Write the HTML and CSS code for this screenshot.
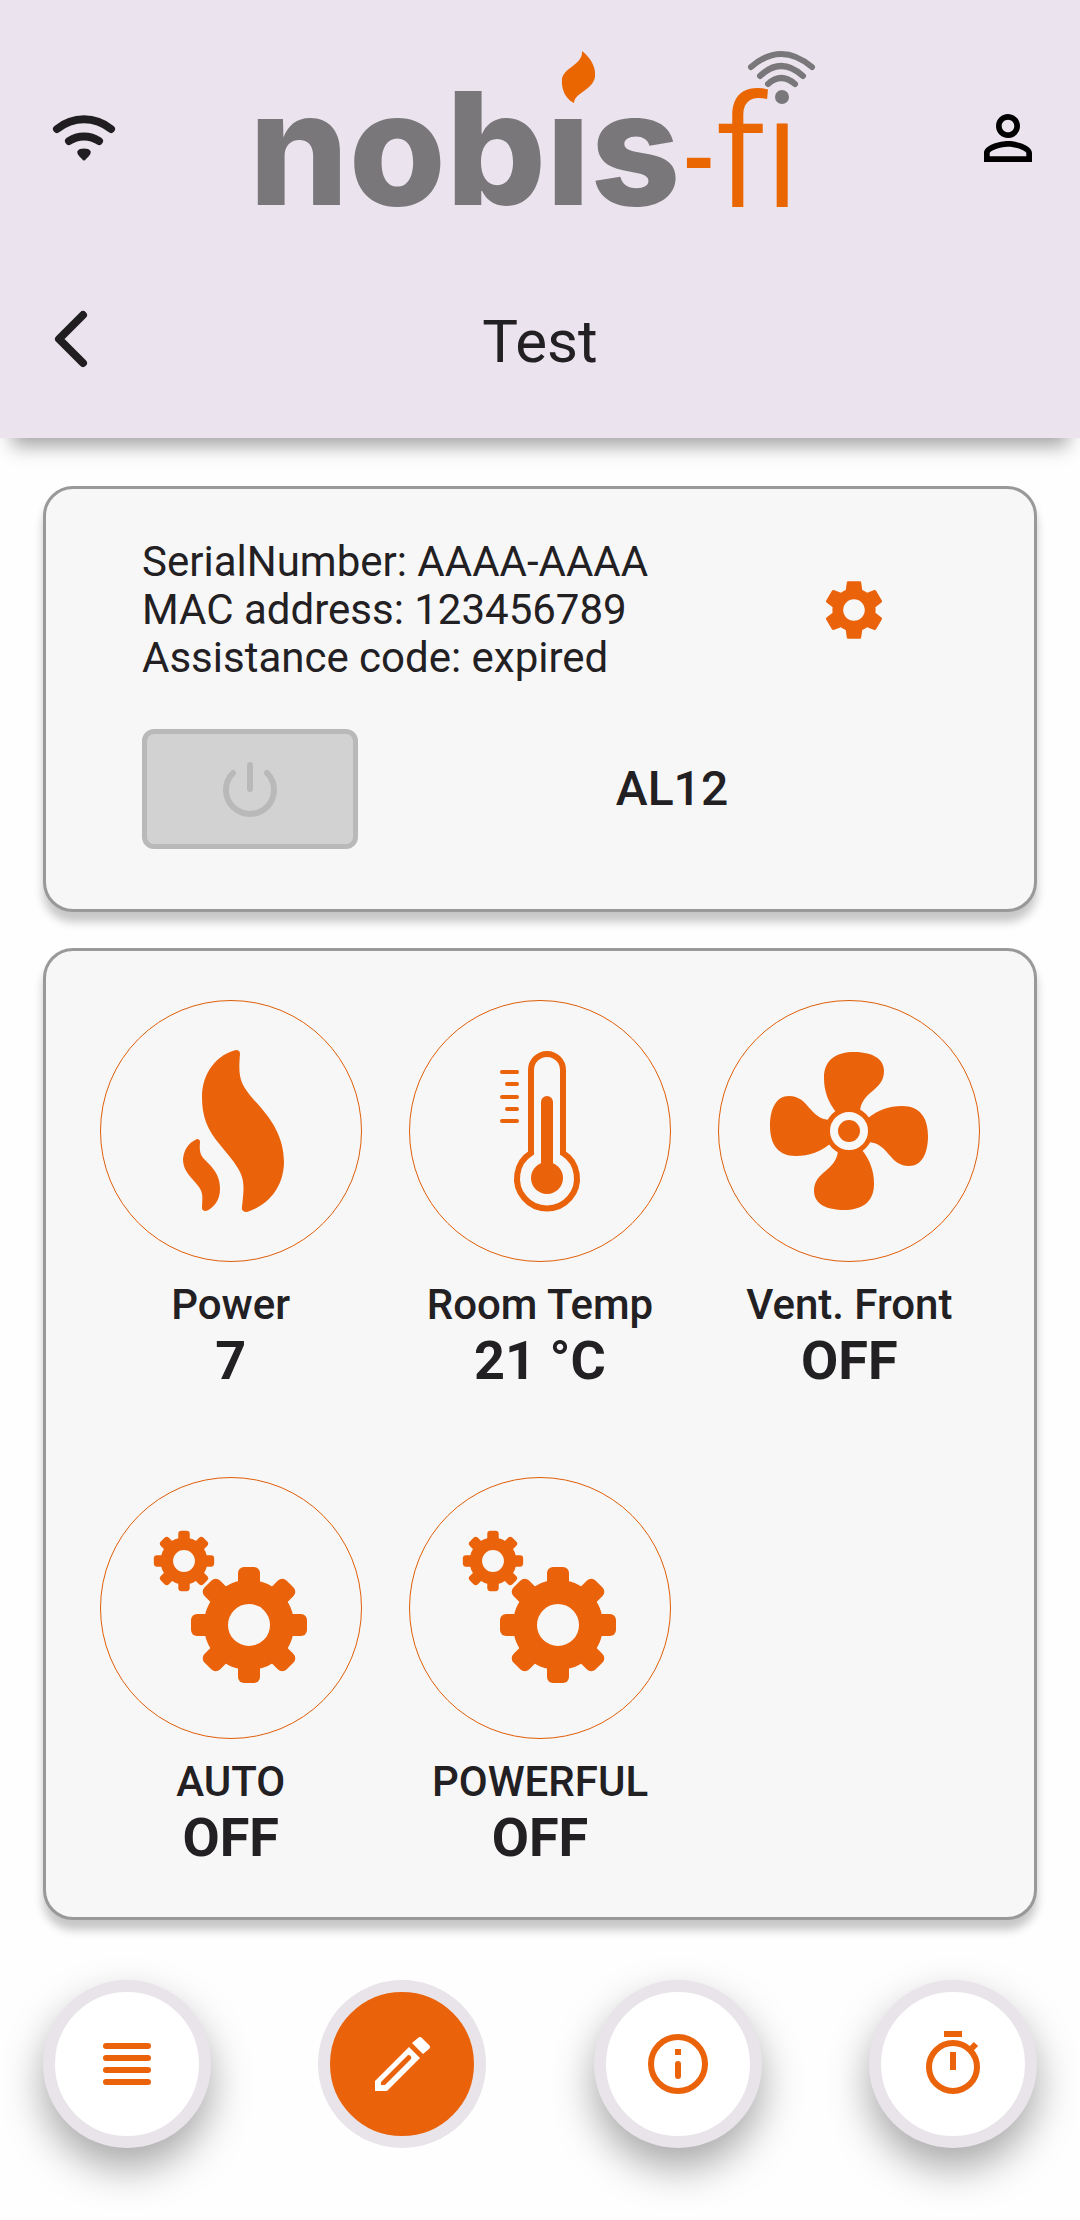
FILE: index.html
```html
<!DOCTYPE html>
<html lang="en">
<head>
<meta charset="utf-8">
<meta name="viewport" content="width=device-width">
<title>Test - nobis-fi</title>
<link rel="stylesheet" href="styles.css">
</head>
<body>
<svg class="defs" aria-hidden="true">
  <defs>
    <g id="cog">
      <circle r="33" fill="none" stroke="currentColor" stroke-width="24"/>
      <g id="teeth">
        <rect x="-11" y="-58" width="22" height="24" rx="6"/>
        <rect x="-11" y="34" width="22" height="24" rx="6"/>
        <rect x="-58" y="-11" width="24" height="22" rx="6"/>
        <rect x="34" y="-11" width="24" height="22" rx="6"/>
      </g>
      <use href="#teeth" transform="rotate(45)"/>
    </g>
    <path id="blade" d="M-13 -19C-21 -29 -25 -40 -25 -53C-25 -72 -12 -79 5 -79C22 -79 35 -73 35 -60C35 -40 12 -40 11 -19Z"/>
    <symbol id="cogs" viewBox="0 0 262 262">
      <use href="#cog" transform="translate(149 148)"/>
      <use href="#cog" transform="translate(84 84) scale(.52)"/>
    </symbol>
  </defs>
</svg>

<header class="header">
  <div class="brand">
    <button class="icon-button" type="button" aria-label="Connection">
      <svg class="icon" viewBox="0 0 72 72" fill="none" stroke="currentColor" stroke-width="8" stroke-linecap="round">
        <path d="M9 27C25 14 47 14 63 27M21 39C30 33 42 33 51 39"/>
        <path d="M32 47Q36 46 40 47Q45 49 41 54L38 57Q36 60 34 57L31 54Q27 49 32 47Z" fill="currentColor" stroke="none"/>
      </svg>
    </button>
    <svg class="logo" viewBox="246 30 600 216" role="img" aria-label="nobis-fi">
      <text class="logo-main" x="249" y="205">nobıs</text>
      <text class="logo-dash" x="681" y="187">-</text>
      <text class="logo-suffix" x="715" y="206">f</text>
      <text class="logo-suffix" x="765" y="206">ı</text>
      <path class="logo-flame" d="M582 51C592 59 596 68 595 77C592 91 575 92 574 103C565 99 561 88 562 79C564 67 583 65 582 51Z"/>
      <circle cx="782" cy="97" r="7" fill="#797779"/>
      <path class="logo-waves" d="M768 84Q781 72 795 84M760 76Q781 56 803 76M751 67Q781 41 812 67"/>
    </svg>
    <button class="icon-button icon-button-dark" type="button" aria-label="Account">
      <svg class="icon" viewBox="0 0 24 24" fill="currentColor"><path d="M12 5.900c1.160 0 2.100.94 2.100 2.100s-.94 2.100-2.100 2.100S9.900 9.160 9.900 8s.94-2.100 2.100-2.100m0 9c2.970 0 6.100 1.460 6.100 2.100v1.100H5.900V17c0-.64 3.130-2.100 6.100-2.100M12 4C9.790 4 8 5.790 8 8s1.790 4 4 4 4-1.790 4-4-1.790-4-4-4zm0 9c-2.670 0-8 1.340-8 4v3h16v-3c0-2.660-5.330-4-8-4z"/></svg>
    </button>
  </div>
  <div class="title-bar">
    <button class="icon-button" type="button" aria-label="Back">
      <svg class="icon" viewBox="0 0 72 72" fill="none" stroke="currentColor" stroke-width="8" stroke-linecap="round" stroke-linejoin="round"><path d="M35 12L11 36L35 60"/></svg>
    </button>
    <h1 class="title">Test</h1>
  </div>
</header>

<main class="content">
  <section class="card device">
    <div class="device-info">
      <div class="device-lines">
        <p>SerialNumber: AAAA-AAAA</p>
        <p>MAC address: 123456789</p>
        <p>Assistance code: expired</p>
      </div>
      <div class="settings">
        <button class="icon-button icon-button-accent" type="button" aria-label="Settings">
          <svg class="icon" viewBox="0 0 24 24" fill="currentColor"><path d="M19.140 12.940c0.040-0.300,0.060-0.610,0.060-0.940c0-0.320-0.020-0.640-0.070-0.940l2.030-1.580c0.180-0.140,0.230-0.410,0.120-0.610l-1.920-3.320c-0.120-0.220-0.370-0.290-0.590-0.220l-2.390,0.960c-0.500-0.380-1.030-0.700-1.620-0.940L14.400,2.810c-0.040-0.240-0.240-0.410-0.480-0.410h-3.840c-0.240,0-0.430,0.170-0.470,0.410L9.250,5.350C8.660,5.590,8.120,5.920,7.630,6.290L5.240,5.330c-0.220-0.080-0.470,0-0.590,0.220L2.740,8.870C2.620,9.080,2.660,9.340,2.860,9.480l2.030,1.580C4.840,11.360,4.800,11.690,4.800,12s0.020,0.640,0.070,0.940l-2.030,1.580c-0.180,0.140-0.230,0.410-0.120,0.610l1.920,3.320c0.120,0.220,0.370,0.290,0.590,0.220l2.390-0.960c0.500,0.380,1.030,0.700,1.620,0.940l0.360,2.540c0.050,0.240,0.240,0.410,0.480,0.410h3.840c0.240,0,0.440-0.170,0.470-0.410l0.360-2.540c0.590-0.240,1.130-0.560,1.620-0.940l2.390,0.960c0.220,0.080,0.470,0,0.590-0.220l1.920-3.320c0.120-0.220,0.070-0.470-0.120-0.610L19.140,12.940z M12,15.600c-1.980,0-3.600-1.620-3.600-3.600s1.620-3.600,3.600-3.600s3.600,1.620,3.600,3.600S13.980,15.600,12,15.600z"/></svg>
        </button>
      </div>
    </div>
    <div class="device-state">
      <button class="power" type="button" disabled aria-label="Power on or off">
        <svg class="icon" viewBox="0 0 72 72" fill="none" stroke="currentColor" stroke-width="6" stroke-linecap="round"><path d="M36 12V36M19 20A24 24 0 1 0 53 20"/></svg>
      </button>
      <p class="alarm">AL12</p>
    </div>
  </section>

  <section class="card functions">
    <button class="function" type="button">
      <svg class="dial" viewBox="0 0 262 262" fill="currentColor">
        <path d="M136 50Q140 50 140 54C138 78 140 84 154 100C172 119 184 137 184 163C183 190 166 206 147 212Q141 212 142 207C145 178 146 176 121 146C107 130 102 116 102 97C102 72 118 54 136 50Z"/>
        <path d="M97 139Q100 139 100 142C99 154 101 156 108 163C117 172 120 179 120 189C120 200 114 208 106 211Q102 211 102 208C103 193 103 191 94 181C86 172 83 167 83 159C84 150 88 143 97 139Z"/>
      </svg>
      <span class="label">Power</span>
      <span class="value">7</span>
    </button>
    <button class="function" type="button">
      <svg class="dial" viewBox="0 0 262 262" fill="currentColor">
        <path d="M122 153V70a16 16 0 0 1 32 0V153A30 30 0 1 1 122 153Z" fill="none" stroke="currentColor" stroke-width="6"/>
        <rect x="132" y="96" width="12" height="76" rx="6"/>
        <circle cx="138" cy="178" r="16"/>
        <path d="M93 72H108M98 84H108M93 97H108M98 109H108M93 121H108" fill="none" stroke="currentColor" stroke-width="4" stroke-linecap="round"/>
      </svg>
      <span class="label">Room Temp</span>
      <span class="value">21 °C</span>
    </button>
    <button class="function" type="button">
      <svg class="dial" viewBox="-131 -131 262 262" fill="currentColor">
        <use href="#blade"/>
        <use href="#blade" transform="rotate(90)"/>
        <use href="#blade" transform="rotate(180)"/>
        <use href="#blade" transform="rotate(270)"/>
        <circle r="24"/>
        <circle r="15" fill="none" stroke="#f8f8f8" stroke-width="8"/>
      </svg>
      <span class="label">Vent. Front</span>
      <span class="value">OFF</span>
    </button>
    <button class="function" type="button">
      <svg class="dial" viewBox="0 0 262 262" fill="currentColor"><use href="#cogs" width="262" height="262"/></svg>
      <span class="label">AUTO</span>
      <span class="value">OFF</span>
    </button>
    <button class="function" type="button">
      <svg class="dial" viewBox="0 0 262 262" fill="currentColor"><use href="#cogs" width="262" height="262"/></svg>
      <span class="label">POWERFUL</span>
      <span class="value">OFF</span>
    </button>
  </section>
</main>

<nav class="tabs">
  <button class="tab" type="button" aria-label="List">
    <svg class="icon" viewBox="0 0 72 72" fill="none" stroke="currentColor" stroke-width="6" stroke-linecap="round"><path d="M15 18H57M15 30H57M15 42H57M15 54H57"/></svg>
  </button>
  <button class="tab tab-active" type="button" aria-label="Edit" aria-current="page">
    <svg class="icon" viewBox="0 0 72 72" fill="currentColor">
      <path fill-rule="evenodd" d="M9 63V53L43 19L54 30L21 63ZM15 54V57H19L45 31Q46 27 42 27Z"/>
      <path d="M46 15L52 10Q54 8 56 10L63 17Q65 19 63 21L57 26Z"/>
    </svg>
  </button>
  <button class="tab" type="button" aria-label="Information">
    <svg class="icon" viewBox="0 0 72 72" fill="none" stroke="currentColor" stroke-width="6"><circle cx="36" cy="36" r="27"/><path d="M36 21V27"/><path d="M36 36V48" stroke-linecap="round"/></svg>
  </button>
  <button class="tab" type="button" aria-label="Timer">
    <svg class="icon" viewBox="0 0 72 72" fill="none" stroke="currentColor" stroke-width="6"><circle cx="36" cy="39" r="24"/><path d="M27 6H45M36 24V42M52 23L59 16"/></svg>
  </button>
</nav>
</body>
</html>
```
FILE: styles.css
```css
* {
  box-sizing: border-box;
}

body {
  margin: 0;
  background: #fefefe;
  color: #222022;
  font-family: Roboto, "Liberation Sans", sans-serif;
}

p,
h1 {
  margin: 0;
}

button {
  margin: 0;
  padding: 0;
  border: 0;
  background: none;
  color: inherit;
  font: inherit;
}

.defs {
  position: absolute;
  width: 0;
  height: 0;
}

.icon {
  display: block;
  width: 72px;
  height: 72px;
}

.icon-button {
  flex: none;
  color: #211e22;
}

.icon-button-dark {
  color: #000;
}

.icon-button-accent {
  color: #ea620a;
}

/* Header */
.header {
  display: flex;
  flex-direction: column;
  gap: 57px;
  padding: 30px 0 57px;
  background: #ebe3ee;
  box-shadow: 0 20px 18px -12px rgba(0, 0, 0, 0.36);
}

.brand {
  display: flex;
  align-items: center;
  justify-content: space-between;
  padding: 0 36px 0 48px;
}

.logo {
  width: 600px;
  height: 216px;
}

.logo-main {
  fill: #797779;
  font-family: Inter, sans-serif;
  font-size: 157px;
  font-weight: 800;
}

.logo-suffix {
  fill: #ea6600;
  stroke: #ea6600;
  stroke-width: 2;
  font-family: Roboto, sans-serif;
  font-size: 154px;
  font-weight: 300;
}

.logo-dash {
  fill: #ea6600;
  font-family: Roboto, sans-serif;
  font-size: 80px;
  font-weight: 900;
}

.logo-flame {
  fill: #ea6600;
}

.logo-waves {
  fill: none;
  stroke: #797779;
  stroke-width: 6;
  stroke-linecap: round;
}

.title-bar {
  display: grid;
  grid-template-columns: 72px 1fr 72px;
  align-items: start;
  padding: 0 48px;
}

.title {
  font-size: 60px;
  font-weight: 400;
  line-height: 78px;
  text-align: center;
}

/* Cards */
.content {
  display: flex;
  flex-direction: column;
  gap: 36px;
  padding: 48px 43px 60px;
}

.card {
  border: 3px solid #9a999a;
  border-radius: 30px;
  background: #f7f7f8;
  box-shadow: 0 10px 10px rgba(0, 0, 0, 0.22);
}

.device {
  display: flex;
  flex-direction: column;
  gap: 47px;
  padding: 49px 48px 60px 96px;
}

.device-info {
  display: flex;
  align-items: center;
}

.device-lines {
  flex: 1;
  font-size: 42px;
  line-height: 48px;
}

.settings {
  display: flex;
  flex: none;
  justify-content: center;
  width: 264px;
}

.device-state {
  display: flex;
  align-items: center;
}

.power {
  display: flex;
  flex: none;
  align-items: center;
  justify-content: center;
  width: 216px;
  height: 120px;
  border: 5px solid #b9b9b9;
  border-radius: 12px;
  background: #d2d2d2;
  color: #b9b9b9;
}

.alarm {
  flex: 1;
  font-size: 48px;
  font-weight: 500;
  line-height: 56px;
  text-align: center;
}

.functions {
  display: grid;
  grid-template-columns: repeat(3, 1fr);
  row-gap: 84px;
  padding: 49px 30px 47px;
}

.function {
  display: flex;
  flex-direction: column;
  align-items: center;
}

.dial {
  width: 262px;
  height: 262px;
  margin-bottom: 19px;
  border-radius: 50%;
  outline: 1px solid #e05e08;
  outline-offset: -1px;
  color: #ea620a;
}

.label {
  font-size: 42px;
  font-weight: 500;
  line-height: 48px;
}

.value {
  font-size: 54px;
  font-weight: 700;
  line-height: 64px;
}

/* Bottom navigation */
.tabs {
  display: flex;
  justify-content: space-between;
  padding: 0 43px 72px;
}

.tab {
  display: flex;
  flex: none;
  align-items: center;
  justify-content: center;
  width: 168px;
  height: 168px;
  border: 12px solid #e8e4e9;
  border-radius: 50%;
  background: #fff;
  box-shadow: 0 20px 40px rgba(0, 0, 0, 0.34);
  color: #ea620a;
}

.tab-active {
  background: #ea620a;
  box-shadow: none;
  color: #fff;
}
```
